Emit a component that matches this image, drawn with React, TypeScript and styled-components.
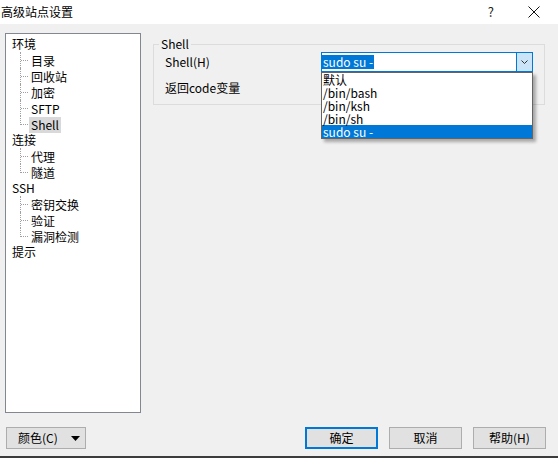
import React from 'react'
import styled, { createGlobalStyle } from 'styled-components'

const GlobalStyle = createGlobalStyle`
  html, body {
    margin: 0;
    padding: 0;
    background: #f0f0f0;
  }
  body {
    font-family: "Noto Sans CJK SC", "Noto Sans", sans-serif;
    font-size: 12px;
    color: #000;
  }
`

const Window = styled.div`
  width: 558px;
  height: 458px;
  box-sizing: border-box;
  display: flex;
  flex-direction: column;
  background: #f0f0f0;
  border-bottom: 2px solid #3c3c3c;
  overflow: hidden;
`

const TitleBar = styled.div`
  flex: none;
  height: 24px;
  display: flex;
  align-items: center;
  padding-left: 1px;
  background: #fff;
`

const Title = styled.span`
  flex: 1;
  line-height: 16px;
`

const HelpGlyph = styled.span`
  margin-right: 34px;
  font-size: 13px;
  line-height: 16px;
  color: #222;
`

const CloseIcon = styled.svg`
  margin-right: 18px;
  margin-top: -1px;
`

const Content = styled.div`
  flex: none;
  display: flex;
  gap: 12px;
  height: 380px;
  padding: 9px 12px 0 5px;
`

const Tree = styled.div`
  width: 136px;
  height: 380px;
  box-sizing: border-box;
  border: 1px solid #828790;
  background: #fff;
  padding: 2px 0 0 4px;
`

const RootRow = styled.div`
  height: 16px;
  line-height: 16px;
`

const Label = styled.span<{ $selected?: boolean }>`
  display: inline-block;
  height: 16px;
  line-height: 16px;
  padding: 0 2px;
  background: ${(p) => (p.$selected ? '#d9d9d9' : 'transparent')};
`

const ChildRow = styled.div<{ $last?: boolean }>`
  position: relative;
  height: 16px;
  padding-left: 19px;

  &::before {
    content: '';
    position: absolute;
    left: 10px;
    top: 0;
    height: ${(p) => (p.$last ? '9px' : '16px')};
    border-left: 1px dotted #a0a0a0;
  }

  &::after {
    content: '';
    position: absolute;
    left: 11px;
    top: 8px;
    width: 7px;
    border-top: 1px dotted #a0a0a0;
  }
`

const GroupBox = styled.fieldset`
  align-self: flex-start;
  width: 392px;
  box-sizing: border-box;
  margin: 4px 0 0 0;
  padding: 0;
  min-width: 0;
  border: 1px solid #dcdcdc;
`

const Legend = styled.legend`
  margin-left: 5px;
  padding: 0 2px;
  line-height: 14px;
`

const Form = styled.div`
  display: grid;
  grid-template-columns: 156px 212px;
  grid-auto-rows: auto;
  row-gap: 8px;
  align-items: center;
  padding: 1px 11px 8px 11px;
`

const FieldLabel = styled.span`
  line-height: 16px;
`

const Combo = styled.div`
  position: relative;
  height: 20px;
  box-sizing: border-box;
  display: flex;
  border: 1px solid #0078d7;
  background: #fff;
`

const ComboValue = styled.div`
  flex: 1;
  display: flex;
  align-items: center;
`

const Selection = styled.span`
  line-height: 14px;
  padding: 0 1px;
  background: #0078d7;
  color: #fff;
`

const ComboButton = styled.div`
  width: 15px;
  display: flex;
  align-items: center;
  justify-content: center;
  border-left: 1px solid #0078d7;
  background: #cce4f7;
`

const DropList = styled.div`
  position: absolute;
  top: calc(100% + 1px);
  left: -1px;
  width: 212px;
  box-sizing: border-box;
  border: 1px solid #646464;
  background: #fff;
  box-shadow: 3px 3px 3px rgba(0, 0, 0, 0.3);
  z-index: 2;
`

const Option = styled.div<{ $selected?: boolean }>`
  height: 13px;
  line-height: 13px;
  padding-left: 1px;
  white-space: nowrap;
  background: ${(p) => (p.$selected ? '#0078d7' : 'transparent')};
  color: ${(p) => (p.$selected ? '#fff' : '#000')};
`

const Footer = styled.div`
  flex: none;
  display: flex;
  align-items: center;
  padding: 14px 12px 7px 6px;
`

const Button = styled.button<{ $default?: boolean }>`
  width: 73px;
  height: 22px;
  box-sizing: border-box;
  padding: 0;
  font: inherit;
  line-height: 16px;
  color: #000;
  background: #e1e1e1;
  border: ${(p) => (p.$default ? '2px solid #0078d7' : '1px solid #adadad')};
  border-radius: 0;
`

const MenuButton = styled(Button)`
  width: 80px;
  display: flex;
  align-items: center;
  justify-content: space-between;
  padding: 0 5px 0 11px;
`

const Spacer = styled.div`
  flex: 1;
`

const ButtonGroup = styled.div`
  display: flex;
  gap: 11px;
`

type Node = { label: string; children?: string[] }

const tree: Node[] = [
  { label: '环境', children: ['目录', '回收站', '加密', 'SFTP', 'Shell'] },
  { label: '连接', children: ['代理', '隧道'] },
  { label: 'SSH', children: ['密钥交换', '验证', '漏洞检测'] },
  { label: '提示' },
]

const options = ['默认', '/bin/bash', '/bin/ksh', '/bin/sh', 'sudo su -']

export default function App() {
  return (
    <Window>
      <GlobalStyle />
      <TitleBar>
        <Title>高级站点设置</Title>
        <HelpGlyph>?</HelpGlyph>
        <CloseIcon width="12" height="12" viewBox="0 0 12 12">
          <path d="M0.5 0.5 L11.5 11.5 M11.5 0.5 L0.5 11.5" stroke="#111" strokeWidth="1" fill="none" />
        </CloseIcon>
      </TitleBar>

      <Content>
        <Tree>
          {tree.map((node) => (
            <React.Fragment key={node.label}>
              <RootRow>
                <Label>{node.label}</Label>
              </RootRow>
              {node.children?.map((child, i) => (
                <ChildRow key={child} $last={i === node.children!.length - 1}>
                  <Label $selected={child === 'Shell'}>{child}</Label>
                </ChildRow>
              ))}
            </React.Fragment>
          ))}
        </Tree>

        <GroupBox>
          <Legend>Shell</Legend>
          <Form>
            <FieldLabel>Shell(H)</FieldLabel>
            <Combo>
              <ComboValue>
                <Selection>sudo su -</Selection>
              </ComboValue>
              <ComboButton>
                <svg width="7" height="4" viewBox="0 0 7 4">
                  <path d="M0.5 0.5 L3.5 3.5 L6.5 0.5" stroke="#333" strokeWidth="1" fill="none" />
                </svg>
              </ComboButton>
              <DropList>
                {options.map((o) => (
                  <Option key={o} $selected={o === 'sudo su -'}>
                    {o}
                  </Option>
                ))}
              </DropList>
            </Combo>
            <FieldLabel>返回code变量</FieldLabel>
          </Form>
        </GroupBox>
      </Content>

      <Footer>
        <MenuButton>
          <span>颜色(C)</span>
          <svg width="9" height="5" viewBox="0 0 9 5">
            <path d="M0 0 L9 0 L4.5 5 Z" fill="#000" />
          </svg>
        </MenuButton>
        <Spacer />
        <ButtonGroup>
          <Button $default>确定</Button>
          <Button>取消</Button>
          <Button>帮助(H)</Button>
        </ButtonGroup>
      </Footer>
    </Window>
  )
}
